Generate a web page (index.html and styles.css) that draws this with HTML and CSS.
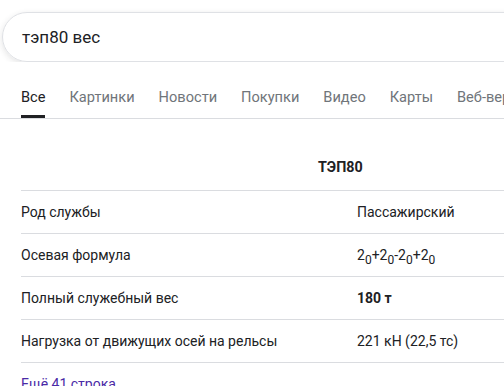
FILE: index.html
```html
<!DOCTYPE html>
<html lang="ru">
<head>
<meta charset="utf-8">
<title>тэп80 вес</title>
<link rel="stylesheet" href="styles.css">
</head>
<body>
<div class="page">
  <div class="search">
    <div class="search-box">тэп80 вес</div>
  </div>
  <nav class="tabs">
    <a class="tab active">Все</a>
    <a class="tab">Картинки</a>
    <a class="tab">Новости</a>
    <a class="tab">Покупки</a>
    <a class="tab">Видео</a>
    <a class="tab">Карты</a>
    <a class="tab">Веб-версия</a>
  </nav>
  <section class="facts">
    <div class="facts-head">
      <span class="spacer"></span>
      <span class="title">ТЭП80</span>
    </div>
    <div class="row">
      <span class="label">Род службы</span>
      <span class="value">Пассажирский</span>
    </div>
    <div class="row">
      <span class="label">Осевая формула</span>
      <span class="value">2<sub>0</sub>+2<sub>0</sub>-2<sub>0</sub>+2<sub>0</sub></span>
    </div>
    <div class="row">
      <span class="label">Полный служебный вес</span>
      <span class="value strong">180 т</span>
    </div>
    <div class="row">
      <span class="label">Нагрузка от движущих осей на рельсы</span>
      <span class="value">221 кН (22,5 тс)</span>
    </div>
    <a class="more">Ещё 41 строка</a>
  </section>
</div>
</body>
</html>
```
FILE: styles.css
```css
html, body {
  margin: 0;
  padding: 0;
  background: #fff;
}

body {
  font-family: Roboto, Arial, sans-serif;
  color: #202124;
  overflow: hidden;
  width: 504px;
  height: 386px;
}

.page {
  width: 504px;
}

.search {
  padding: 12px 0 0 2px;
  overflow: hidden;
}

.search-box {
  width: 600px;
  height: 48px;
  box-sizing: content-box;
  border: 1px solid #dfe1e5;
  border-radius: 25px;
  box-shadow: 0 2px 6px rgba(32, 33, 36, 0.12);
  padding-left: 19px;
  display: flex;
  align-items: center;
  font-size: 17px;
  color: #202124;
}

.tabs {
  display: flex;
  gap: 24px;
  padding: 0 0 0 21px;
  margin-top: 16px;
  border-bottom: 1px solid #dadce0;
  white-space: nowrap;
  overflow: hidden;
}

.tab {
  font-size: 14.6px;
  color: #70757a;
  padding: 10px 0 9px;
  border-bottom: 3px solid transparent;
  line-height: 18px;
}

.tab.active {
  color: #202124;
  border-bottom-color: #202124;
}

.facts {
  margin-left: 21px;
  font-size: 14px;
}

.facts-head {
  display: flex;
  height: 72px;
  align-items: flex-end;
  padding-bottom: 14px;
  border-bottom: 1px solid #dadce0;
  box-sizing: border-box;
  line-height: 18px;
}

.spacer {
  width: 297px;
}

.title {
  font-weight: bold;
  font-size: 14.3px;
}

.row {
  display: flex;
  align-items: center;
  height: 43px;
  border-bottom: 1px solid #dadce0;
  box-sizing: border-box;
}

.label {
  width: 336px;
}

.value sub {
  font-size: 12px;
  vertical-align: -4px;
  line-height: 0;
}

.strong {
  font-weight: bold;
}

.more {
  display: block;
  color: #4a2aa6;
  padding-top: 13px;
}
```
